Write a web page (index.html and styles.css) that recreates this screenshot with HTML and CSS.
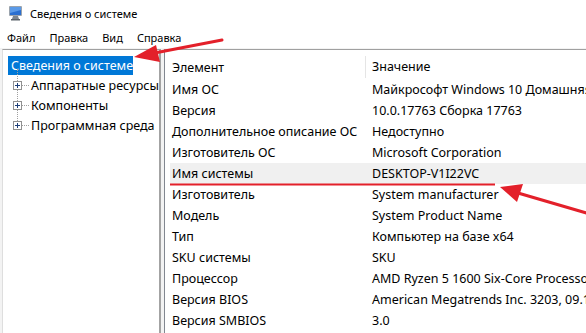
FILE: index.html
```html
<!DOCTYPE html>
<html lang="ru">
<head>
<meta charset="utf-8">
<link rel="stylesheet" href="styles.css">
</head>
<body>
<div class="window">
  <div class="titlebar">
    <svg class="app-icon" width="16" height="16" viewBox="0 0 16 16">
      <rect x="1" y="1" width="13" height="10" rx="1" fill="#9aa3ad"/>
      <rect x="2" y="2" width="11" height="8" fill="#2a6fd0"/>
      <path d="M2 2h11v3L2 8z" fill="#5a9ae8"/>
      <path d="M5 11h5l1 3H4z" fill="#7d8690"/>
      <rect x="3" y="14" width="9" height="1.5" fill="#5c646c"/>
    </svg>
    <span class="title">Сведения о системе</span>
  </div>
  <div class="menubar">
    <span class="menu-item">Файл</span>
    <span class="menu-item">Правка</span>
    <span class="menu-item">Вид</span>
    <span class="menu-item">Справка</span>
  </div>
  <div class="panes">
    <div class="tree">
      <div class="tree-root"><span class="selected">Сведения о системе</span></div>
      <div class="tree-children">
        <div class="tree-item"><span class="expander"></span><span class="dots"></span><span class="label">Аппаратные ресурсы</span></div>
        <div class="tree-item"><span class="expander"></span><span class="dots"></span><span class="label">Компоненты</span></div>
        <div class="tree-item last"><span class="expander"></span><span class="dots"></span><span class="label">Программная среда</span></div>
      </div>
    </div>
    <div class="list">
      <div class="list-header">
        <div class="col-a">Элемент</div>
        <div class="col-b head-b">Значение</div>
      </div>
      <div class="row"><div class="col-a">Имя ОС</div><div class="col-b">Майкрософт Windows 10 Домашняя</div></div>
      <div class="row"><div class="col-a">Версия</div><div class="col-b">10.0.17763 Сборка 17763</div></div>
      <div class="row"><div class="col-a">Дополнительное описание ОС</div><div class="col-b">Недоступно</div></div>
      <div class="row"><div class="col-a">Изготовитель ОС</div><div class="col-b">Microsoft Corporation</div></div>
      <div class="row hl"><div class="col-a">Имя системы</div><div class="col-b">DESKTOP-V1I22VC</div></div>
      <div class="row"><div class="col-a">Изготовитель</div><div class="col-b">System manufacturer</div></div>
      <div class="row"><div class="col-a">Модель</div><div class="col-b">System Product Name</div></div>
      <div class="row"><div class="col-a">Тип</div><div class="col-b">Компьютер на базе x64</div></div>
      <div class="row"><div class="col-a">SKU системы</div><div class="col-b">SKU</div></div>
      <div class="row"><div class="col-a">Процессор</div><div class="col-b">AMD Ryzen 5 1600 Six-Core Processor</div></div>
      <div class="row"><div class="col-a">Версия BIOS</div><div class="col-b">American Megatrends Inc. 3203, 09.11.2018</div></div>
      <div class="row"><div class="col-a">Версия SMBIOS</div><div class="col-b">3.0</div></div>
    </div>
  </div>
  <svg class="annotations" width="586" height="333" viewBox="0 0 586 333">
    <line x1="222" y1="40" x2="152" y2="53.5" stroke="#e3202a" stroke-width="3" stroke-linecap="round"/>
    <polygon points="134,57 156,45 160,62" fill="#e3202a"/>
    <rect x="170" y="183.5" width="325" height="2" fill="#e3202a"/>
    <line x1="590" y1="214" x2="518" y2="193" stroke="#e3202a" stroke-width="3" stroke-linecap="round"/>
    <polygon points="500,187 523,184 517,202" fill="#e3202a"/>
  </svg>
</div>
</body>
</html>
```

FILE: styles.css
```css
* { box-sizing: border-box; }
html, body { margin: 0; padding: 0; }
body {
  width: 586px;
  height: 333px;
  overflow: hidden;
  background: #ffffff;
  font-family: "Noto Sans", "Segoe UI", sans-serif;
  font-size: 12.5px;
  color: #000;
}
.window {
  position: relative;
  width: 586px;
  height: 333px;
  display: flex;
  flex-direction: column;
}
.titlebar {
  height: 26px;
  display: flex;
  align-items: center;
  padding-left: 8px;
  gap: 6px;
}
.app-icon { flex: none; }
.title { font-size: 11px; }
.menubar {
  height: 22px;
  display: flex;
  align-items: center;
  padding-left: 7px;
  padding-top: 1px;
  gap: 14px;
}
.menu-item { font-size: 11px; }
.panes {
  flex: 1;
  display: flex;
  gap: 3px;
  padding-left: 2px;
  background: #f3f3f3;
  padding-top: 1px;
  min-height: 0;
}
.tree {
  width: 159px;
  background: #fff;
  border-left: 1px solid #dedede;
  border-top: 1px solid #a0a0a0;
  border-right: 2px solid #a3a3a3;
  padding: 5px 0 0 5px;
}
.tree-root { height: 20px; display: flex; align-items: center; }
.selected {
  background: #0078d7;
  color: #fff;
  padding: 0 3px 0 3px;
  height: 19px;
  line-height: 19px;
  width: 125px;
  white-space: nowrap;
}
.tree-children { position: relative; }
.tree-item {
  height: 20px;
  display: flex;
  align-items: center;
  position: relative;
}
.tree-item::before {
  content: "";
  position: absolute;
  left: 9px;
  top: -6px;
  height: 26px;
  border-left: 1px dotted #a0a0a0;
}
.tree-item.last::before { height: 16px; }
.expander {
  position: relative;
  width: 9px;
  height: 9px;
  margin-left: 5px;
  border: 1px solid #919191;
  background: #fff;
  z-index: 1;
}
.expander::before {
  content: "";
  position: absolute;
  left: 1px; top: 3px;
  width: 5px; height: 1px;
  background: #1f3f7a;
}
.expander::after {
  content: "";
  position: absolute;
  left: 3px; top: 1px;
  width: 1px; height: 5px;
  background: #1f3f7a;
}
.dots {
  width: 7px;
  border-top: 1px dotted #a0a0a0;
  margin-right: 2px;
}
.label { white-space: nowrap; }
.list {
  flex: 1;
  background: #fff;
  border-left: 1px solid #828790;
  border-top: 1px solid #a0a0a0;
  padding-top: 5px;
  padding-left: 5px;
  overflow: hidden;
}
.list-header, .row {
  display: flex;
  white-space: nowrap;
}
.list-header { height: 24px; align-items: center; }
.row { height: 21px; align-items: center; }
.row.hl { background: #f0f0f0; }
.col-a {
  width: 195px;
  flex: none;
  padding-left: 2px;
}
.col-b { padding-left: 7px; }
.head-b { border-left: 1px solid #e5e5e5; height: 22px; line-height: 22px; padding-left: 6px; }
.annotations {
  position: absolute;
  left: 0; top: 0;
  pointer-events: none;
}
```
